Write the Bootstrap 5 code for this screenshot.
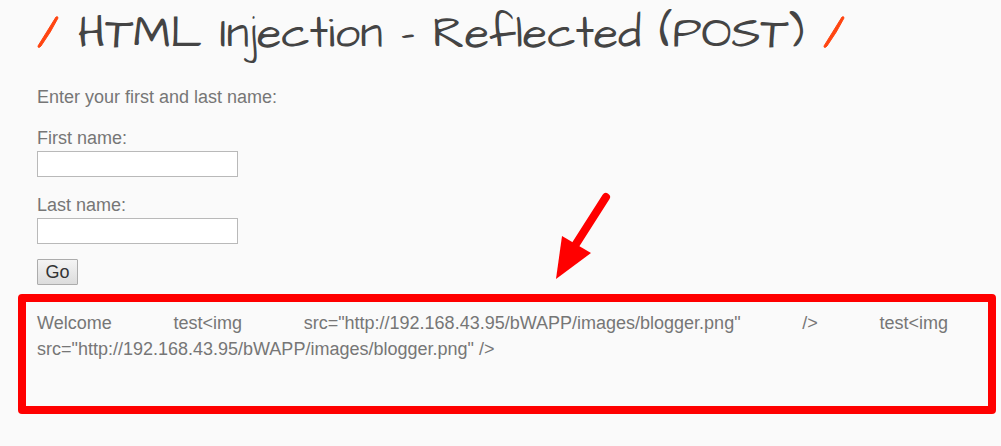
<!DOCTYPE html>
<html lang="en">
<head>
<meta charset="utf-8">
<meta name="viewport" content="width=device-width, initial-scale=1">
<title>HTML Injection - Reflected (POST)</title>
<link href="https://cdn.jsdelivr.net/npm/bootstrap@5.3.0/dist/css/bootstrap.min.css" rel="stylesheet">
<style>
  body { background: #fafafa; color: #767676; font: 18px/26px "Liberation Sans", Arial, sans-serif; }
  .page-body { padding: 0 5px 32px 18px; }
  .lesson { padding-left: 19px; }
  .lesson h1 { color: #444; font: 400 45px/68px "Architects Daughter", Inter, sans-serif; gap: 19px; }
  .slash { width: 22px; height: 32px; margin-bottom: 4px; fill: #ff4410; stroke: #ff4410; }
  .intro { margin-bottom: 15px; }
  .field { margin-bottom: 15px; }
  .field .form-control { width: 201px; height: 26px; border: 1px solid #b9b9b9; background: #fff; }
  .btn-go { width: 41px; height: 26px; border: 1px solid #acacac; border-radius: 1px; color: #333; font-size: 18px; line-height: 24px; background: linear-gradient(#f4f4f4, #dcdcdc); }
  .result { margin-top: 9px; min-height: 120px; padding: 8px 40px 8px 11px; border: 8px solid #f00; border-radius: 4px; text-align: justify; }
  .pointer { left: 528px; bottom: 100%; margin-bottom: 20px; width: 66px; height: 92px; }
</style>
</head>
<body>
<main class="page-body">
  <div class="lesson">
    <h1 class="d-flex align-items-center m-0 text-nowrap">
      <svg class="slash flex-shrink-0" viewBox="0 0 22 32" aria-hidden="true"><path d="M1 30 19 1Q21 0 21 2 14 16 4 30 1 33 1 30Z"/></svg>
      <span>HTML Injection - Reflected (POST)</span>
      <svg class="slash flex-shrink-0" viewBox="0 0 22 32" aria-hidden="true"><path d="M1 30 19 1Q21 0 21 2 14 16 4 30 1 33 1 30Z"/></svg>
    </h1>
    <form action="#" method="post">
      <p class="intro mt-3">Enter your first and last name:</p>
      <div class="field">
        <label class="d-block" for="firstname">First name:</label>
        <input class="form-control rounded-0 p-1" type="text" id="firstname" name="firstname">
      </div>
      <div class="field">
        <label class="d-block" for="lastname">Last name:</label>
        <input class="form-control rounded-0 p-1" type="text" id="lastname" name="lastname">
      </div>
      <button class="btn btn-go d-block p-0" type="submit">Go</button>
    </form>
  </div>
  <section class="result position-relative">
    Welcome test&lt;img src="http://192.168.43.95/bWAPP/images/blogger.png" /&gt; test&lt;img src="http://192.168.43.95/bWAPP/images/blogger.png" /&gt;
    <svg class="pointer position-absolute" viewBox="0 0 66 92" aria-hidden="true">
      <path d="M52 7 22 54" stroke="#f00" stroke-width="8" stroke-linecap="round"/>
      <path d="M8 46 37 63 2 89Z" fill="#f00"/>
    </svg>
  </section>
</main>
<script src="https://cdn.jsdelivr.net/npm/bootstrap@5.3.0/dist/js/bootstrap.bundle.min.js"></script>
</body>
</html>
